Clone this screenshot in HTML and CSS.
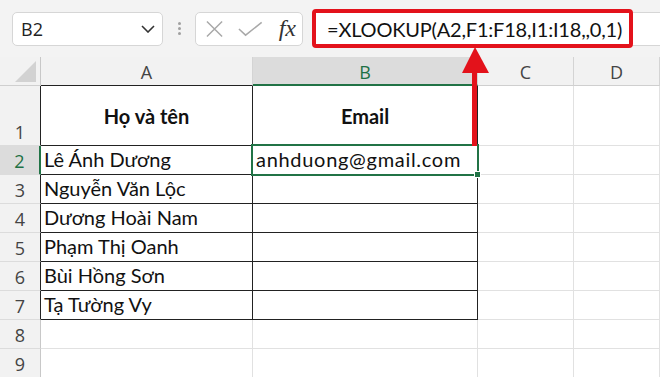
FILE: index.html
```html
<!DOCTYPE html>
<html lang="vi">
<head>
  <meta charset="UTF-8" />
  <meta name="viewport" content="width=device-width, initial-scale=1.0" />
  <title>XLOOKUP</title>
  <link rel="stylesheet" href="styles.css">
</head>
<body>
  <div class="app">
    <div class="toolbar">
      <div class="namebox">
        <span>B2</span>
        <svg class="chev" width="14" height="8" viewBox="0 0 14 8"><path d="M1 1 L7 7 L13 1" /></svg>
      </div>
      <div class="grip"><i></i><i></i><i></i></div>
      <div class="fxbox">
        <svg class="ico" width="18" height="18" viewBox="0 0 18 18"><path d="M1 1 L17 17 M17 1 L1 17" /></svg>
        <svg class="ico" width="26" height="16" viewBox="0 0 26 16"><path d="M1 8 L8 14.5 L25 1" /></svg>
        <span class="fx">fx</span>
      </div>
      <div class="formula">
        <div class="formula-hl">=XLOOKUP(A2,F1:F18,I1:I18,,0,1)</div>
      </div>
    </div>

    <div class="sheet">
      <!-- column headers -->
      <div class="corner"><span class="tri"></span></div>
      <div class="colh edge">A</div>
      <div class="colh sel">B</div>
      <div class="colh">C</div>
      <div class="colh">D</div>

      <!-- row 1 -->
      <div class="rowh tb">1</div>
      <div class="cell t head">Họ và tên</div>
      <div class="cell t head">Email</div>
      <div class="cell"></div>
      <div class="cell"></div>

      <!-- row 2 -->
      <div class="rowh tb sel">2</div>
      <div class="cell t">Lê Ánh Dương</div>
      <div class="cell t active"><span class="mail">anhduong@gmail.com</span><span class="handle"></span></div>
      <div class="cell"></div>
      <div class="cell"></div>

      <div class="rowh tb">3</div>
      <div class="cell t">Nguyễn Văn Lộc</div>
      <div class="cell t"></div>
      <div class="cell"></div>
      <div class="cell"></div>

      <div class="rowh tb">4</div>
      <div class="cell t">Dương Hoài Nam</div>
      <div class="cell t"></div>
      <div class="cell"></div>
      <div class="cell"></div>

      <div class="rowh tb">5</div>
      <div class="cell t">Phạm Thị Oanh</div>
      <div class="cell t"></div>
      <div class="cell"></div>
      <div class="cell"></div>

      <div class="rowh tb">6</div>
      <div class="cell t">Bùi Hồng Sơn</div>
      <div class="cell t"></div>
      <div class="cell"></div>
      <div class="cell"></div>

      <div class="rowh tb">7</div>
      <div class="cell t">Tạ Tường Vy</div>
      <div class="cell t"></div>
      <div class="cell"></div>
      <div class="cell"></div>

      <div class="rowh">8</div>
      <div class="cell"></div>
      <div class="cell"></div>
      <div class="cell"></div>
      <div class="cell"></div>

      <div class="rowh">9</div>
      <div class="cell"></div>
      <div class="cell"></div>
      <div class="cell"></div>
      <div class="cell"></div>
    </div>

    <!-- annotation arrow -->
    <svg class="arrow" width="30" height="100" viewBox="0 0 30 100">
      <polygon points="14,0 1,26 28,26" />
      <rect x="11" y="24" width="5" height="75" />
    </svg>
  </div>
</body>
</html>
```

FILE: styles.css
```css
* { box-sizing: border-box; }
body {
  margin: 0;
  background: #fff;
  font-family: 'Open Sans', 'Noto Sans', sans-serif;
  overflow: hidden;
}
.app { position: relative; width: 660px; height: 377px; overflow: hidden; }

/* formula bar */
.toolbar {
  height: 57px; background: #f3f3f3;
  display: flex; align-items: center; padding: 0 0 0 12px;
}
.namebox {
  width: 151px; height: 34px; background: #fff; border: 1px solid #d6d6d6; border-radius: 5px;
  display: flex; align-items: center; justify-content: space-between; padding: 0 7px 0 8px;
  font-size: 18px; color: #222;
}
.chev path { fill: none; stroke: #333; stroke-width: 1.6; }
.grip { width: 32px; display: flex; flex-direction: column; align-items: center; gap: 2px; }
.grip i { width: 3px; height: 3px; background: #a0a0a0; border-radius: 50%; }
.fxbox {
  width: 108px; height: 34px; background: #fff; border: 1px solid #d6d6d6; border-radius: 5px;
  display: flex; align-items: center; padding: 0 6px 0 10px; gap: 15px;
}
.ico path { fill: none; stroke: #a9a9a9; stroke-width: 1.6; }
.fx { font-family: 'Liberation Serif', serif; font-style: italic; font-size: 24px; color: #333; margin-left: 1px; }
.formula {
  flex: 1; height: 34px; margin-left: 9px; margin-right: -8px;
  background: #fff; border: 1px solid #d6d6d6; border-radius: 4px;
  display: flex; align-items: center;
}
.formula-hl {
  width: 321px; height: 39px; margin-left: -1px;
  border: 4px solid #e3121b; border-radius: 4px; background: #fff;
  display: flex; align-items: center; padding: 0 0 0 11px;
  font-family: 'Lato', 'Noto Sans', sans-serif; font-size: 20px; color: #111;
  letter-spacing: -0.2px;
}

/* grid */
.sheet {
  display: grid;
  grid-template-columns: 41px 212px 225px 96px 1fr;
  grid-template-rows: 29px 60px repeat(8, 29px);
}
.corner, .colh { background: #f2f2f2; border-right: 1px solid #d4d4d4; border-bottom: 1px solid #cfcfcf; }
.corner { position: relative; border-right-color: #c8c8c8; }
.tri {
  position: absolute; right: 4px; bottom: 3px; width: 21px; height: 21px;
  background: #d2d2d2; clip-path: polygon(100% 0, 100% 100%, 0 100%);
}
.colh {
  display: flex; align-items: center; justify-content: center;
  font-size: 18px; color: #444; padding-top: 1px;
}
.colh.edge { border-bottom-color: #222; }
.colh.sel { background: #dcdcdc; color: #1e7145; border-bottom: 2px solid #217346; padding-top: 2px; }

.rowh {
  background: #f2f2f2; border-right: 1px solid #c8c8c8; border-bottom: 1px solid #dcdcdc;
  display: flex; align-items: flex-end; justify-content: center;
  font-size: 18px; color: #444; line-height: 1; padding-bottom: 4px;
}
.rowh.tb { border-right-color: #222; }
.rowh.sel { background: #dcdcdc; color: #1e7145; border-right: 2px solid #217346; }

.cell {
  border-right: 1px solid #e1e1e1; border-bottom: 1px solid #e1e1e1;
  display: flex; align-items: flex-end;
  font-family: 'Lato', 'Noto Sans', sans-serif; font-size: 20px; color: #111;
  line-height: 1; padding: 0 0 5px 3px; white-space: nowrap;
}
.cell.t { border-right-color: #222; border-bottom-color: #222; }
.cell.head { font-weight: bold; align-items: center; justify-content: center; padding: 0; }
.mail { letter-spacing: 0.7px; }

.active { position: relative; }
.active::after {
  content: ''; position: absolute; left: -2px; top: -2px; right: -2px; bottom: -2px;
  border: 2px solid #217346;
}
.handle {
  position: absolute; right: -4px; bottom: -4px; width: 7px; height: 7px;
  background: #217346; border: 1px solid #fff; z-index: 2;
}

.arrow { position: absolute; left: 461px; top: 47px; }
.arrow polygon, .arrow rect { fill: #e3121b; }
```
